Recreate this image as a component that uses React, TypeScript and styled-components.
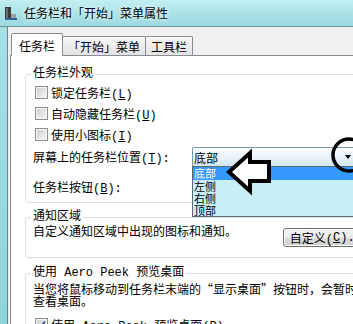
import * as React from "react";
import styled, { createGlobalStyle, css } from "styled-components";

const GlobalStyle = createGlobalStyle`
  html, body {
    margin: 0;
    padding: 0;
    width: 353px;
    height: 324px;
    overflow: hidden;
    background: #f0f0f0;
  }
  body {
    font-family: "Liberation Mono", "Noto Sans CJK SC", monospace;
    font-size: 12px;
    color: #000;
  }
  u { text-decoration-thickness: 1px; text-underline-offset: 1px; }
`;

const Window = styled.div`
  position: relative;
  width: 440px;
  height: 324px;
  overflow: hidden;
  display: flex;
  flex-direction: column;
`;

const TitleBar = styled.div`
  height: 26px;
  flex-shrink: 0;
  display: flex;
  align-items: center;
  gap: 6px;
  padding-left: 4px;
  background: linear-gradient(180deg, #c2eef2 0%, #a9e1e7 55%, #9dd9df 100%);
  border-bottom: 1px solid #6c9599;
`;

const Title = styled.span`
  font-family: "Noto Sans CJK SC", sans-serif;
  font-size: 12px;
  line-height: 16px;
  text-shadow: 0 0 6px #e8fbfc, 0 0 3px #e8fbfc;
`;

const Frame = styled.div`
  flex: 1;
  display: flex;
  min-height: 0;
`;

const FrameEdge = styled.div`
  width: 7px;
  flex-shrink: 0;
  background: linear-gradient(180deg, #a6dfe5, #8fd3da);
  border-right: 1px solid #5f8a8f;
`;

const Client = styled.div`
  flex: 1;
  display: flex;
  flex-direction: column;
  padding: 6px 0 0 2px;
  background: #f0f0f0;
`;

const TabStrip = styled.div`
  height: 22px;
  display: flex;
  align-items: flex-end;
  padding-left: 1px;
  position: relative;
  z-index: 1;
`;

const Tab = styled.div<{ $active?: boolean }>`
  box-sizing: border-box;
  display: flex;
  align-items: center;
  justify-content: center;
  font-family: "Noto Sans CJK SC", sans-serif;
  border: 1px solid #898c95;
  border-bottom: none;
  border-radius: 2px 2px 0 0;
  height: 19px;
  padding: 0 5px;
  margin-left: -1px;
  background: linear-gradient(180deg, #f7f7f7, #e3e3e3);
  ${(p) =>
    p.$active &&
    css`
      height: 23px;
      margin-bottom: -1px;
      margin-left: 0;
      padding: 0 7px;
      background: #fff;
    `}
`;

const TabPanel = styled.div`
  flex: 1;
  background: #fff;
  border: 1px solid #898c95;
  border-right: none;
  padding: 10px 0 0 14px;
`;

const Group = styled.fieldset<{ $pb?: number; $mt?: number }>`
  margin: ${(p) => p.$mt ?? 0}px 0 0 0;
  width: 352px;
  box-sizing: border-box;
  border: 1px solid #d5dfe5;
  border-radius: 3px;
  padding: 0 0 ${(p) => p.$pb ?? 5}px 7px;
  min-width: 0;
`;

const Legend = styled.legend`
  padding: 0 2px;
  margin-left: -2px;
  line-height: 16px;
`;

const CheckRow = styled.div<{ $mt?: number }>`
  height: 21px;
  display: flex;
  align-items: center;
  gap: 3px;
  margin-top: ${(p) => p.$mt ?? 0}px;
  white-space: nowrap;
`;

const Box = styled.span<{ $checked?: boolean }>`
  box-sizing: border-box;
  width: 13px;
  height: 13px;
  margin-left: 2px;
  flex-shrink: 0;
  border: 1px solid #8e8f8f;
  background: linear-gradient(135deg, #cdcdcd, #f6f6f6);
  box-shadow: inset 0 0 0 1px #f4f4f4;
  display: flex;
  align-items: center;
  justify-content: center;
`;

const FieldRow = styled.div<{ $mt?: number; $h?: number }>`
  display: grid;
  grid-template-columns: 159px 165px;
  align-items: center;
  height: ${(p) => p.$h ?? 22}px;
  margin-top: ${(p) => p.$mt ?? 0}px;
  white-space: nowrap;
`;

const ComboWrap = styled.div`
  position: relative;
  height: 20px;
`;

const Combo = styled.div`
  box-sizing: border-box;
  height: 20px;
  display: flex;
  align-items: center;
  padding-left: 1px;
  border: 1px solid #7c97b2;
  border-radius: 2px;
  background: linear-gradient(180deg, #fbfdff 0%, #eaf3fb 50%, #d3e6f5 100%);
  font-family: "Noto Sans CJK SC", sans-serif;
`;

const ComboText = styled.span`
  flex: 1;
`;

const ComboArrow = styled.span`
  width: 17px;
  display: flex;
  justify-content: center;
  &::after {
    content: "";
    border-left: 3.5px solid transparent;
    border-right: 3.5px solid transparent;
    border-top: 4px solid #000;
  }
`;

const DropList = styled.div`
  position: absolute;
  top: 19px;
  left: 0;
  right: 0;
  height: 51px;
  box-sizing: border-box;
  border: 1px solid #5e6a70;
  background: #c8eff8;
  font-family: "Noto Sans CJK SC", sans-serif;
  font-size: 11px;
  z-index: 2;
`;

const DropItem = styled.div<{ $selected?: boolean }>`
  padding-left: 1px;
  line-height: 12px;
  height: 12px;
  ${(p) =>
    p.$selected &&
    css`
      height: 13px;
      line-height: 13px;
      background: #3399ff;
      color: #fff;
    `}
`;

const InfoRow = styled.div`
  display: flex;
  align-items: flex-start;
`;

const InfoText = styled.span`
  width: 257px;
  line-height: 16px;
  white-space: nowrap;
`;

const Button = styled.div`
  box-sizing: border-box;
  margin-top: 3px;
  height: 19px;
  padding: 0 6px;
  display: flex;
  align-items: center;
  white-space: nowrap;
  border: 1px solid #707070;
  border-radius: 3px;
  background: linear-gradient(180deg, #f2f2f2 0%, #ebebeb 50%, #dddddd 51%, #cfcfcf 100%);
  box-shadow: inset 0 0 0 1px #fcfcfc;
`;

const Description = styled.p`
  margin: 2px 0 0;
  line-height: 12px;
  white-space: nowrap;
`;

const Cjk = styled.span`
  font-family: "Noto Sans CJK SC", sans-serif;
`;

const Overlay = styled.svg<{ $x: number; $y: number }>`
  position: absolute;
  left: ${(p) => p.$x}px;
  top: ${(p) => p.$y}px;
  z-index: 5;
  overflow: visible;
`;

const AppIcon = () => (
  <svg width="14" height="16" viewBox="0 0 14 16">
    <rect x="1" y="2" width="6" height="12" fill="#3a3a3a" />
    <rect x="2" y="3" width="2" height="10" fill="#6b6b6b" />
    <rect x="7" y="9" width="5" height="5" fill="#9aa0a6" />
    <rect x="1" y="13" width="12" height="2" fill="#2f5e8f" />
  </svg>
);

const Check = () => (
  <svg width="9" height="9" viewBox="0 0 9 9">
    <path d="M1 4.5 L3.5 7 L8 1.5" fill="none" stroke="#3c4f8a" strokeWidth="1.8" />
  </svg>
);

export default function App() {
  return (
    <>
      <GlobalStyle />
      <Window>
        <TitleBar>
          <AppIcon />
          <Title>任务栏和「开始」菜单属性</Title>
        </TitleBar>
        <Frame>
          <FrameEdge />
          <Client>
            <TabStrip>
              <Tab $active>任务栏</Tab>
              <Tab>「开始」菜单</Tab>
              <Tab>工具栏</Tab>
            </TabStrip>
            <TabPanel>
              <Group>
                <Legend>任务栏外观</Legend>
                <CheckRow>
                  <Box />
                  <span>
                    锁定任务栏(<u>L</u>)
                  </span>
                </CheckRow>
                <CheckRow>
                  <Box />
                  <span>
                    自动隐藏任务栏(<u>U</u>)
                  </span>
                </CheckRow>
                <CheckRow>
                  <Box />
                  <span>
                    使用小图标(<u>I</u>)
                  </span>
                </CheckRow>
                <FieldRow $mt={1}>
                  <span>
                    屏幕上的任务栏位置(<u>T</u>):
                  </span>
                  <ComboWrap>
                    <Combo>
                      <ComboText>底部</ComboText>
                      <ComboArrow />
                    </Combo>
                    <DropList>
                      <DropItem $selected>底部</DropItem>
                      <DropItem>左侧</DropItem>
                      <DropItem>右侧</DropItem>
                      <DropItem>顶部</DropItem>
                    </DropList>
                  </ComboWrap>
                </FieldRow>
                <FieldRow $mt={9} $h={20}>
                  <span>
                    任务栏按钮(<u>B</u>):
                  </span>
                </FieldRow>
              </Group>
              <Group $mt={6} $pb={10}>
                <Legend>通知区域</Legend>
                <InfoRow>
                  <InfoText>自定义通知区域中出现的图标和通知。</InfoText>
                  <Button>
                    自定义(<u>C</u>)...
                  </Button>
                </InfoRow>
              </Group>
              <Group $mt={7}>
                <Legend>使用 Aero Peek 预览桌面</Legend>
                <Description>
                  当您将鼠标移动到任务栏末端的<Cjk>“</Cjk>显示桌面<Cjk>”</Cjk>按钮时，会暂时
                  <br />
                  查看桌面。
                </Description>
                <CheckRow $mt={5}>
                  <Box $checked>
                    <Check />
                  </Box>
                  <span>
                    使用 Aero Peek 预览桌面(<u>P</u>)
                  </span>
                </CheckRow>
              </Group>
            </TabPanel>
          </Client>
        </Frame>
        <Overlay $x={224} $y={149} width="50" height="48" viewBox="0 0 50 48">
          <polygon
            points="5,23 26,4 26,13 45,13 45,32 26,32 26,42"
            fill="#fff"
            stroke="#000"
            strokeWidth="4"
            strokeLinejoin="miter"
          />
        </Overlay>
        <Overlay $x={330} $y={137} width="40" height="40" viewBox="0 0 40 40">
          <circle cx="19" cy="18" r="16" fill="none" stroke="#000" strokeWidth="3.5" />
        </Overlay>
      </Window>
    </>
  );
}
